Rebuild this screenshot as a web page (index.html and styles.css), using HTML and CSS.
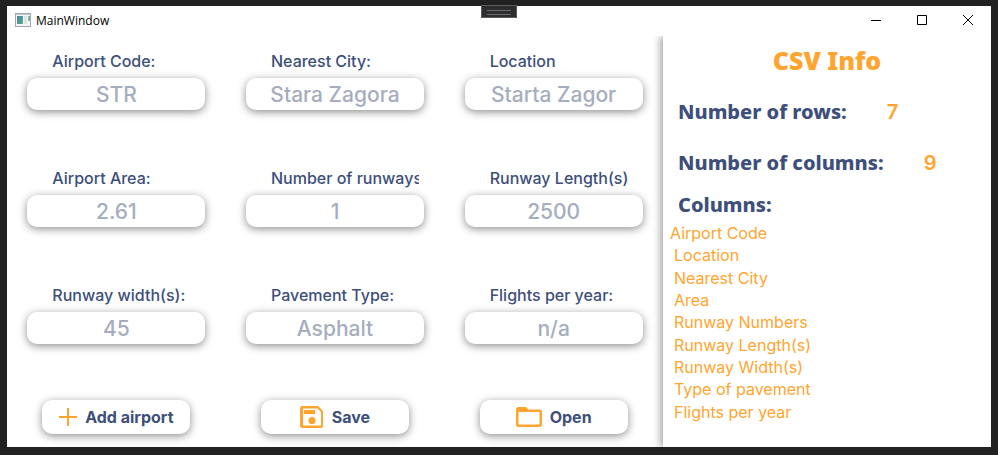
FILE: index.html
```html
<!DOCTYPE html>
<html lang="en">
<head>
<meta charset="utf-8">
<title>MainWindow</title>
<link rel="stylesheet" href="styles.css">
</head>
<body>
<div class="grip"></div>
<div class="window">
  <header class="titlebar">
    <svg class="app-icon" width="16" height="14" viewBox="0 0 16 14">
      <defs><linearGradient id="screen" x1="0" y1="0" x2="1" y2="1"><stop offset="0" stop-color="#4b7fae"/><stop offset="1" stop-color="#5fae7d"/></linearGradient></defs>
      <rect x=".5" y=".5" width="15" height="13" fill="#f4f5f6" stroke="#a3a8ae"/>
      <path d="M1 1.500h14" stroke="#c3c9d0"/>
      <rect x="2" y="3" width="6" height="8" fill="url(#screen)"/>
      <rect x="9" y="3" width="3" height="8" fill="#dfe3e7"/>
      <rect x="13" y="3" width="2" height="5" fill="#86b3b0"/>
    </svg>
    <span class="caption">MainWindow</span>
    <button class="control" aria-label="Minimize"><svg width="10" height="10" viewBox="0 0 10 10"><path d="M0 5.500h10"/></svg></button>
    <button class="control" aria-label="Maximize"><svg width="10" height="10" viewBox="0 0 10 10"><path d="M.5.5h9v9h-9z"/></svg></button>
    <button class="control" aria-label="Close"><svg width="10" height="10" viewBox="0 0 10 10"><path d="M0 0l10 10M10 0L0 10"/></svg></button>
  </header>
  <main class="content">
    <form class="airport">
      <div class="field"><label for="code">Airport Code:</label><input id="code" value="STR"></div>
      <div class="field"><label for="city">Nearest City:</label><input id="city" value="Stara Zagora"></div>
      <div class="field"><label for="location">Location</label><input id="location" value="Starta Zagor"></div>
      <div class="field"><label for="area">Airport Area:</label><input id="area" value="2.61"></div>
      <div class="field"><label for="runways">Number of runways:</label><input id="runways" value="1"></div>
      <div class="field"><label for="length">Runway Length(s)</label><input id="length" value="2500"></div>
      <div class="field"><label for="width">Runway width(s):</label><input id="width" value="45"></div>
      <div class="field"><label for="pavement">Pavement Type:</label><input id="pavement" value="Asphalt"></div>
      <div class="field"><label for="flights">Flights per year:</label><input id="flights" value="n/a"></div>
      <button type="button" class="action">
        <svg width="18" height="18" viewBox="0 0 18 18"><path d="M9 0v18M0 9h18" stroke="#ffa52f" stroke-width="2"/></svg>
        Add airport
      </button>
      <button type="button" class="action">
        <svg width="24" height="24" viewBox="0 0 24 24"><path fill="#ffa52f" fill-rule="evenodd" d="M2.500 1H18l5 5v14.500a2.500 2.500 0 0 1-2.500 2.500h-18A2.500 2.500 0 0 1 0 20.500v-17A2.500 2.500 0 0 1 2.500 1zM3 3.500v17h18V7l-3.500-3.500zM4 5h11v4H4zM12 12a3.600 3.600 0 1 1 0 7.200 3.600 3.600 0 0 1 0-7.200z"/></svg>
        Save
      </button>
      <button type="button" class="action">
        <svg width="26" height="20" viewBox="0 0 26 20"><path fill="#ffa52f" fill-rule="evenodd" d="M2.500 0H10l2.500 2.500h11A2.500 2.500 0 0 1 26 5v12.500a2.500 2.500 0 0 1-2.500 2.500h-21A2.500 2.500 0 0 1 0 17.500v-15A2.500 2.500 0 0 1 2.500 0zM2.500 5v12.500h21V5z"/></svg>
        Open
      </button>
    </form>
    <aside class="info">
      <h1>CSV Info</h1>
      <div class="stat"><h2>Number of rows:</h2><span>7</span></div>
      <div class="stat"><h2>Number of columns:</h2><span>9</span></div>
      <h2>Columns:</h2>
      <ul>
        <li>Airport Code</li>
        <li>Location</li>
        <li>Nearest City</li>
        <li>Area</li>
        <li>Runway Numbers</li>
        <li>Runway Length(s)</li>
        <li>Runway Width(s)</li>
        <li>Type of pavement</li>
        <li>Flights per year</li>
      </ul>
    </aside>
  </main>
</div>
</body>
</html>
```
FILE: styles.css
```css
* { box-sizing: border-box; }
body {
  margin: 0;
  min-height: 100vh;
  padding: 6px 7px 8px;
  display: flex;
  background: #212121;
  color: #3d4f7a;
  font-family: Inter, "Open Sans", sans-serif;
}
.window {
  flex: 1;
  display: flex;
  flex-direction: column;
  background: #fff;
}
.grip {
  position: absolute;
  top: 5px;
  left: calc(50% - 18px);
  width: 36px;
  height: 13px;
  padding: 4px 5px;
  background: #2d2d2f;
  border: 1px solid #5a5a5c;
}
.grip::before {
  content: "";
  display: block;
  height: 3px;
  border: solid #6a6a6c;
  border-width: 1px 0;
}
.titlebar {
  height: 30px;
  display: flex;
  align-items: center;
  padding: 0 0 2px 8px;
}
.caption {
  flex: 1;
  margin-left: 5px;
  color: #000;
  font: 12px "Open Sans", sans-serif;
}
.control {
  width: 46px;
  height: 28px;
  padding: 0;
  border: 0;
  background: none;
  display: grid;
  place-items: center;
}
.control path { fill: none; stroke: #000; }
.content {
  flex: 1;
  display: grid;
  grid-template-columns: 2fr 1fr;
}
.airport {
  display: grid;
  grid-template-columns: repeat(3, 1fr);
  grid-template-rows: repeat(3, 117px) 1fr;
  justify-items: center;
}
.field {
  width: 178px;
  padding-top: 14px;
}
.field label {
  display: block;
  width: 148px;
  margin: 0 0 6px 25px;
  overflow: hidden;
  white-space: nowrap;
  font-size: 16px;
  font-weight: 500;
  line-height: 22px;
}
.field input {
  display: block;
  width: 100%;
  height: 32px;
  padding: 0;
  border: 0;
  border-radius: 10px;
  background: #fff;
  box-shadow: 0 2px 8px rgba(0, 0, 0, .45);
  color: #a6adbe;
  font: 500 21px Inter, sans-serif;
  text-align: center;
}
.action {
  align-self: center;
  width: 148px;
  height: 34px;
  padding: 0;
  display: flex;
  align-items: center;
  justify-content: center;
  gap: 8px;
  border: 0;
  border-radius: 10px;
  background: #fff;
  box-shadow: 0 2px 8px rgba(0, 0, 0, .45);
  color: #3d4f7a;
  font: 700 16px Inter, sans-serif;
}
.info {
  display: flex;
  flex-direction: column;
  padding: 8px 7px 24px;
  background: #fff;
  box-shadow: -2px 0 8px rgba(0, 0, 0, .4);
  clip-path: inset(0 0 0 -16px);
}
h1, h2 {
  margin: 0;
  font-family: "Noto Sans", sans-serif;
}
h1 {
  color: #ffa52f;
  font-size: 25px;
  font-weight: 900;
  line-height: 32px;
  text-align: center;
  margin-bottom: 10px;
}
h2 {
  padding-left: 8px;
  font-size: 20px;
  font-weight: 800;
  line-height: 34px;
}
.stat {
  height: 51px;
  display: flex;
  align-items: center;
  gap: 40px;
}
.stat span {
  color: #ffa52f;
  font-size: 20px;
  font-weight: 600;
}
ul {
  flex: 1;
  display: grid;
  grid-auto-rows: 1fr;
  margin: 0;
  padding: 0;
  list-style: none;
  color: #ffa52f;
  font-size: 16px;
  line-height: 22px;
}
li + li { padding-left: 4px; }
```
